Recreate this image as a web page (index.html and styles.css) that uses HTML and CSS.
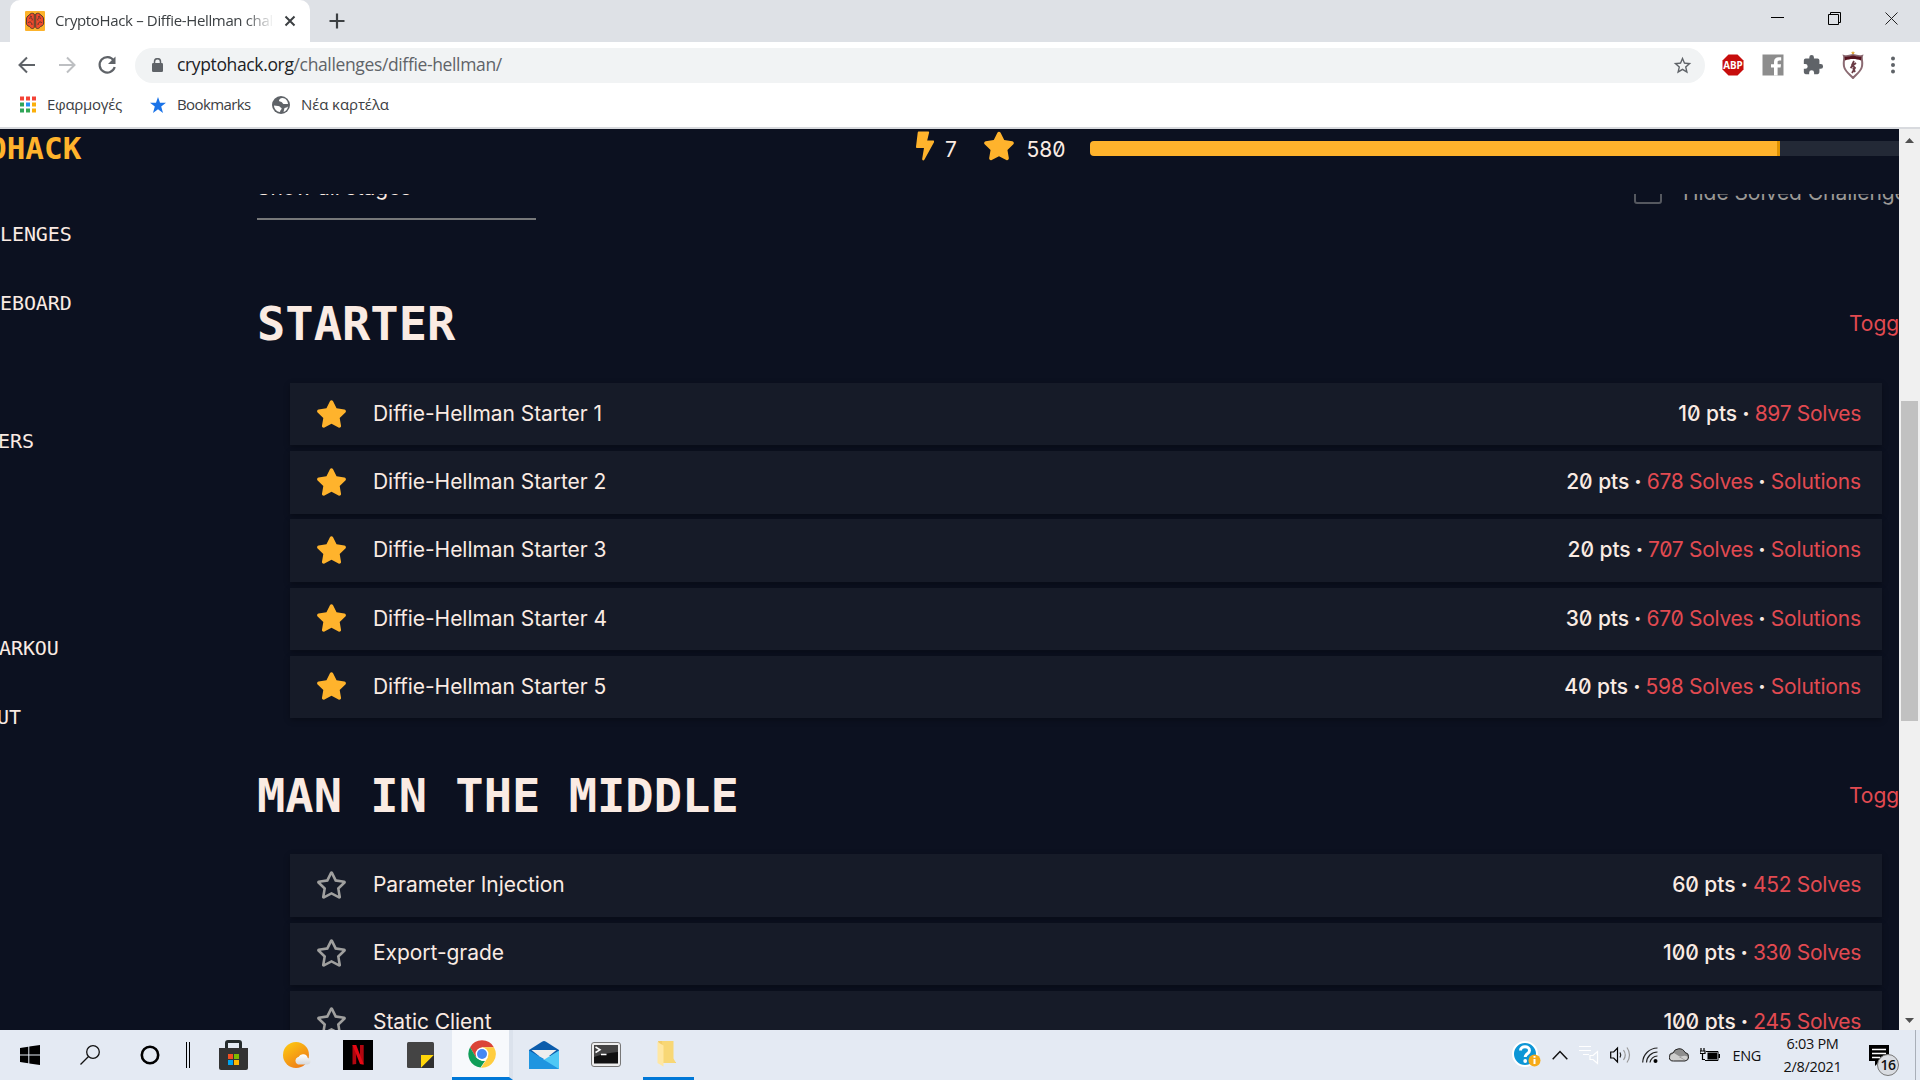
FILE: index.html
```html
<!DOCTYPE html>
<html lang="en">
<head>
<meta charset="utf-8">
<title>CryptoHack – Diffie-Hellman challenges</title>
<link rel="stylesheet" href="styles.css">
</head>
<body>
<svg class="defs" width="0" height="0">
  <symbol id="star" viewBox="0 0 576 512"><path d="M259 18 194 150 48 171c-26 4-37 36-18 55l106 103-25 145c-5 26 23 46 46 34l131-69 131 69c23 12 51-8 46-34l-25-145 106-103c19-19 8-51-18-55l-146-21-65-132c-12-23-46-24-58 0z"/></symbol>
  <symbol id="star-o" viewBox="0 0 576 512"><path d="M528 171 382 150 317 18c-12-23-46-24-58 0l-65 132-146 21c-26 4-37 36-18 55l106 103-25 145c-5 26 23 46 46 34l131-69 131 69c23 12 51-8 46-34l-25-145 106-103c19-19 8-51-18-55zM389 312l23 138-124-66-124 66 23-138L87 214l139-20 62-126 62 126 139 20z"/></symbol>
</svg>
<div class="screen">
  <header class="browser">
    <div class="tabstrip">
      <div class="tab">
        <svg class="favicon" viewBox="0 0 20 20"><rect width="20" height="20" rx="1" fill="#fcb32c"/><path d="M9.300 3C7 1.500 5 2.500 4.500 4 2 5 1 7 1.500 10c-.7 3 .5 5 3 5.500C6 18 8.500 18 9.300 16.500z" fill="#f04a2c" stroke="#56372f"/><path d="M10.700 3c2.300-1.500 4.300-.5 4.800 1C18 5 19 7 18.500 10c.7 3-.5 5-3 5.500-1.500 2.500-4 2.500-4.800 1z" fill="#f04a2c" stroke="#56372f"/><path d="M4 7.500c2-1.500 4 0 3 2M3 12c1.500-2 4-1 4 2M16 7.500c-2-1.500-4 0-3 2M17 12c-1.500-2-4-1-4 2M5 5l2 1M15 5l-2 1" fill="none" stroke="#56372f"/></svg>
        <span class="tab-title">CryptoHack – Diffie-Hellman challenges</span>
        <svg class="tab-close" viewBox="0 0 12 12"><path d="M1.500 1.500l9 9M10.500 1.500l-9 9" stroke="#3c4043" stroke-width="2"/></svg>
      </div>
      <svg class="newtab" viewBox="0 0 16 16"><path d="M8 .5v15M.5 8h15" stroke="#3c4043" stroke-width="2.200"/></svg>
      <div class="winctl">
        <svg width="13" height="13" viewBox="0 0 13 13"><path d="M0 5.500h13" stroke="#000"/></svg>
        <svg width="13" height="13" viewBox="0 0 13 13"><path d="M.5 2.500h10v10h-10zM2.500 2.500v-2h10v10h-2" fill="none" stroke="#000"/></svg>
        <svg width="13" height="13" viewBox="0 0 13 13"><path d="M.5.500l12 12M12.500.500l-12 12" stroke="#222"/></svg>
      </div>
    </div>
    <div class="toolbar">
      <svg class="nav" viewBox="0 0 20 20"><path d="M18 10H3M10 2.500L2.500 10l7.500 7.500" fill="none" stroke="#5f6368" stroke-width="2"/></svg>
      <svg class="nav" viewBox="0 0 20 20"><path d="M2 10h15M10 2.500l7.500 7.500-7.500 7.500" fill="none" stroke="#bdbfc2" stroke-width="2"/></svg>
      <svg class="nav" viewBox="0 0 20 20"><path d="M16.700 5.500A7.700 7.700 0 1 0 17.700 12" fill="none" stroke="#5f6368" stroke-width="2.200"/><path d="M18.500 1.500v7.500H11z" fill="#5f6368"/></svg>
      <div class="omnibox">
        <svg class="lock" viewBox="0 0 11 14"><rect y="5" width="11" height="9" rx="1.300" fill="#5f6368"/><path d="M2.500 6V3.700a3 3 0 0 1 6 0V6" fill="none" stroke="#5f6368" stroke-width="1.500"/></svg>
        <span class="url"><b>cryptohack.org</b>/challenges/diffie-hellman/</span>
        <svg class="fav" viewBox="0 0 24 24"><path d="M22 9.200l-7.200-.6L12 2 9.200 8.600 2 9.200l5.500 4.700L5.800 21l6.200-3.700 6.200 3.700-1.600-7.100zM12 15.400l-3.800 2.300 1-4.300-3.300-2.900 4.400-.4L12 6.100l1.700 4 4.400.4-3.300 2.900 1 4.300z" fill="#5f6368"/></svg>
      </div>
      <div class="exts">
        <svg class="ext" viewBox="0 0 22 22"><path d="M6.500.5h9l6 6v9l-6 6h-9l-6-6v-9z" fill="#c70d0c"/><text x="11" y="14.800" class="abp" textLength="19.500" lengthAdjust="spacingAndGlyphs">ABP</text></svg>
        <svg class="ext" viewBox="0 0 22 22"><rect x=".5" y=".5" width="21" height="21" fill="#8d8d8d"/><path d="M12 21.500v-8H9v-3.300h3V8c0-3.200 1.900-4.700 4.600-4.700h2.600v3.200h-1.800c-1.500 0-1.800.7-1.800 1.800v1.900H19l-.4 3.300h-3v8z" fill="#fff"/></svg>
        <svg class="ext" viewBox="0 0 24 24"><path d="M20.500 11H19V7a2 2 0 0 0-2-2h-4V3.500a2.500 2.500 0 0 0-5 0V5H4a2 2 0 0 0-2 2v3.800h1.500a2.700 2.700 0 0 1 0 5.400H2V20a2 2 0 0 0 2 2h3.800v-1.500a2.700 2.700 0 0 1 5.400 0V22H17a2 2 0 0 0 2-2v-4h1.500a2.500 2.500 0 0 0 0-5z" fill="#5f6368"/></svg>
        <svg class="ext crest" viewBox="0 0 22 28"><path d="M11 0l.7 1.300H13l-1 1 .3 1.200L11 3l-1.300.5.3-1.200-1-1h1.300z" fill="#e0a838"/><path d="M2 5c3 1 6-.5 9-1 3 .5 6 2 9 1-1 3 1.500 7-.5 12-1.500 4-6 7-8.500 10C8.500 24 4 21 2.500 17 .5 12 3 8 2 5z" fill="#fff" stroke="#8b6a72" stroke-width="2"/><path d="M2.500 5.500c3 .7 6-.5 8.500-1 2.500.5 5.500 1.700 8.500 1L19 9.500c-5-2-11-2-16 0z" fill="#57141f"/><path d="M12 10l-2 4 3 3-3 5M14 12l-4 3M11 17l2 4M8.500 17l2-2" fill="none" stroke="#6a3b45" stroke-width="1.800"/></svg>
        <svg class="ext" viewBox="0 0 22 22"><g fill="#5f6368"><circle cx="11" cy="4.500" r="2"/><circle cx="11" cy="11" r="2"/><circle cx="11" cy="17.500" r="2"/></g></svg>
      </div>
    </div>
    <div class="bookmarks">
      <svg class="apps" viewBox="0 0 16 16"><path d="M0 0h4v4H0zM6 0h4v4H6zM12 0h4v4h-4z" fill="#f44336"/><path d="M0 6h4v4H0zM0 12h4v4H0z" fill="#2fa45a"/><path d="M6 6h4v4H6z" fill="#2491f5"/><path d="M6 12h4v4H6z" fill="#34a853"/><path d="M12 6h4v4h-4zM12 12h4v4h-4z" fill="#fbaf0a"/></svg>
      <span class="bm bm-apps">Εφαρμογές</span>
      <svg class="bstar" viewBox="0 0 16 16"><path d="M8 0l2 5.700 6 .1-4.800 3.700L13 16l-5-3.800L3 16l1.800-6.500L0 5.800l6-.1z" fill="#1a73e8"/></svg>
      <span class="bm bm-marks">Bookmarks</span>
      <svg class="globe" viewBox="0 0 18 18"><circle cx="9" cy="9" r="9" fill="#5f6368"/><path d="M10.500 2C8 2 7 3.500 7 5c1 1 3 .5 3.500 2 .4 1.500 3.500 1 5.500 1 0-3-2.500-6-5.500-6zM2 9.500l4 .5c2 0 2 1.500 3.500 2 .5 1.500-1 1.500-1.500 4C5 16 2 13 2 9.500zM16 10.500c-1 .5-2 1.500-3.500 1.500l-1 4c2.500-.8 4-2.500 4.500-5.500z" fill="#fff"/></svg>
      <span class="bm bm-new">Νέα καρτέλα</span>
    </div>
  </header>

  <main class="viewport">
    <div class="page">
      <div class="topbar">
        <span class="brand">OHACK</span>
        <svg class="bolt" viewBox="0 0 18 30"><path d="M3 .5h9c1 0 1.300.700 1 1.500L11.200 9.500H17c1 0 1.500.9 1 1.700L8.500 28.500c-1 1.500-2.500 1-2.300-.7L8 17H1.200C.3 17 0 16.500 0 15.700L1.700 1.800C1.800.9 2.200.5 3 .5z"/></svg>
        <span class="stat streak">7</span>
        <svg class="score-star"><use href="#star"/></svg>
        <span class="stat score">580</span>
        <div class="progress"><div class="progress-fill"></div></div>
      </div>
      <div class="body">
        <nav class="side">
          <span>LENGES</span><span>EBOARD</span><span class="s3">ERS</span><span class="s4">ARKOU</span><span class="s5">UT</span>
        </nav>
        <div class="content">
          <div class="filters">
            <div class="select"><span>Show all stages</span></div>
            <label class="hide"><i></i><span>Hide Solved Challenges</span></label>
          </div>
          <section>
            <div class="head"><h2>STARTER</h2><a>Toggle</a></div>
            <ul>
              <li><svg><use href="#star"/></svg><span class="name">Diffie-Hellman Starter 1</span><span class="meta"><b>10 pts</b><i>·</i><a>897 Solves</a></span></li>
              <li><svg><use href="#star"/></svg><span class="name">Diffie-Hellman Starter 2</span><span class="meta"><b>20 pts</b><i>·</i><a>678 Solves</a><i>·</i><a class="sol">Solutions</a></span></li>
              <li><svg><use href="#star"/></svg><span class="name">Diffie-Hellman Starter 3</span><span class="meta"><b>20 pts</b><i>·</i><a>707 Solves</a><i>·</i><a class="sol">Solutions</a></span></li>
              <li><svg><use href="#star"/></svg><span class="name">Diffie-Hellman Starter 4</span><span class="meta"><b>30 pts</b><i>·</i><a>670 Solves</a><i>·</i><a class="sol">Solutions</a></span></li>
              <li><svg><use href="#star"/></svg><span class="name">Diffie-Hellman Starter 5</span><span class="meta"><b>40 pts</b><i>·</i><a>598 Solves</a><i>·</i><a class="sol">Solutions</a></span></li>
            </ul>
          </section>
          <section class="mitm">
            <div class="head"><h2>MAN IN THE MIDDLE</h2><a>Toggle</a></div>
            <ul class="open">
              <li><svg><use href="#star-o"/></svg><span class="name">Parameter Injection</span><span class="meta"><b>60 pts</b><i>·</i><a>452 Solves</a></span></li>
              <li><svg><use href="#star-o"/></svg><span class="name">Export-grade</span><span class="meta"><b>100 pts</b><i>·</i><a>330 Solves</a></span></li>
              <li><svg><use href="#star-o"/></svg><span class="name">Static Client</span><span class="meta"><b>100 pts</b><i>·</i><a>245 Solves</a></span></li>
            </ul>
          </section>
        </div>
      </div>
    </div>
    <div class="scrollbar">
      <svg viewBox="0 0 9 5"><path d="M0 5L4.500 0 9 5z"/></svg>
      <div class="thumb"></div>
      <svg viewBox="0 0 9 5"><path d="M0 0l4.500 5L9 0z"/></svg>
    </div>
  </main>

  <footer class="taskbar">
    <div class="cell c-start"><svg width="20" height="20" viewBox="0 0 20 20"><path d="M0 3l8.300-1.200v7.700H0zM9.300 1.600L20 0v9.500H9.300zM0 10.500h8.300v7.700L0 17zM9.300 10.500H20V20L9.300 18.400z"/></svg></div>
    <div class="cell c-search"><svg width="20" height="20" viewBox="0 0 20 20"><g fill="none" stroke="#111" stroke-width="1.300"><circle cx="13" cy="7" r="6.300"/><path d="M8.500 11.500L.5 19.500"/></g></svg></div>
    <div class="cell c-cortana"><svg width="20" height="20" viewBox="0 0 20 20"><circle cx="10" cy="10" r="8.200" fill="none" stroke="#000" stroke-width="2.600"/></svg></div>
    <div class="cell c-bars"><svg width="4" height="26" viewBox="0 0 4 26"><path d="M.5 0v26M3.500 0v26" stroke="#000"/></svg></div>
    <div class="cell c-store"><svg width="29" height="30" viewBox="0 0 29 30"><path d="M7.500 9V3q0-1.500 1.500-1.500h11q1.500 0 1.500 1.500v6" fill="none" stroke="#252b2c" stroke-width="3"/><path d="M0 8h29v20q0 2-2 2H2q-2 0-2-2z" fill="#333"/><path d="M9 14h5v5H9z" fill="#f25022"/><path d="M15 14h5v5h-5z" fill="#7fba00"/><path d="M9 20h5v5H9z" fill="#00a4ef"/><path d="M15 20h5v5h-5z" fill="#ffb900"/></svg></div>
    <div class="cell c-weather"><svg width="28" height="26" viewBox="0 0 28 26"><defs><linearGradient id="sun" x1="0" y1="0" x2=".7" y2="1"><stop stop-color="#ffcf10"/><stop offset="1" stop-color="#ee7b18"/></linearGradient><linearGradient id="cl" x2="0" y2="1"><stop stop-color="#fff"/><stop offset="1" stop-color="#d5d8dc"/></linearGradient></defs><circle cx="13" cy="13" r="13" fill="url(#sun)"/><path d="M15 22.500a4 4 0 0 1 0-7.500h.5a5 5 0 0 1 9.300 1 3.300 3.300 0 0 1 0 6.500z" fill="url(#cl)"/></svg></div>
    <div class="cell c-netflix"><svg width="30" height="30" viewBox="0 0 30 30"><path d="M0 0h30v30H0z"/><path d="M9.500 5h3.700v19l-3.700.5zM17 5h3.700v19.500L17 24z" fill="#b1060f"/><path d="M9.500 5h3.700l7.500 19.500L17 24z" fill="#e50914"/></svg></div>
    <div class="cell c-note"><svg width="27" height="26" viewBox="0 0 27 26"><rect width="27" height="26" rx="1.500" fill="#444"/><path d="M14 26V13h13z" fill="#ffd60a"/><path d="M14 26L27 13v13z" fill="#303030"/></svg></div>
    <div class="cell active"><svg width="28" height="28" viewBox="0 0 28 28"><path d="M2.100 7.200A13.700 13.700 0 0 1 25.900 7.200H14L8 17.500z" fill="#db4437"/><path d="M2.100 7.200L8.100 17.400 14 21h3l-4.500 6.600A13.700 13.700 0 0 1 2.100 7.200z" fill="#0f9d58"/><path d="M25.900 7.200H14l5.900 10.200L13 27.700A13.700 13.700 0 0 0 25.900 7.200z" fill="#ffcd40"/><circle cx="14" cy="14" r="6.400" fill="#fff"/><circle cx="14" cy="14" r="5" fill="#4688f4"/></svg></div>
    <div class="cell c-mail"><svg width="30" height="28" viewBox="0 0 30 28"><path d="M0 9L13 .7q2-1.200 4 0L30 9v6H0z" fill="#0b5cab"/><path d="M2.500 9h25L15 19z" fill="#eee"/><path d="M0 9.500L15 18 0 28z" fill="#1687d9"/><path d="M30 9.500L0 28h30z" fill="#4fc8f5"/><path d="M0 9.500L30 28H0z" fill="#1f95e0"/></svg></div>
    <div class="cell c-term"><svg width="30" height="26" viewBox="0 0 30 26"><rect x=".5" y=".5" width="29" height="24" rx="2.500" fill="#eee" stroke="#777"/><rect x="3" y="3" width="24" height="18.500" fill="#111"/><path d="M3 3h24v7Q14 11 3 15z" fill="#444"/><path d="M4.500 5l4.500 2.800-4.500 2.700" fill="none" stroke="#fff" stroke-width="1.500"/><path d="M10 12.500h5.500" stroke="#fff" stroke-width="1.500"/></svg></div>
    <div class="cell folder"><svg width="20" height="26" viewBox="0 0 20 26"><path d="M1 0h15v21h3v1H6z" fill="#f3cd68"/><path d="M5 0h11.500v17.500L19 22H6z" fill="#f8d775"/><path d="M.5 1l6 3.500v21L.5 22z" fill="#ffe7a2"/></svg></div>

    <div class="tray">
      <div class="t-help"><svg width="30" height="28" viewBox="0 0 30 28"><circle cx="13" cy="13" r="12" fill="#0d96d6" stroke="#fff" stroke-width="2"/><path d="M8.500 9.500c0-5 9-5 9 0 0 3.500-4.300 3-4.300 6.500" fill="none" stroke="#fff" stroke-width="3"/><circle cx="13.200" cy="20" r="1.900" fill="#fff"/><circle cx="22.500" cy="19.500" r="6" fill="#f6ab1a"/><path d="M22.500 18v5M22.500 15v1.800" stroke="#fff" stroke-width="2"/></svg></div>
      <svg width="16" height="10" viewBox="0 0 16 10"><path d="M.7 9.300L8 1.500l7.300 7.800" fill="none" stroke="#111" stroke-width="1.500"/></svg>
      <svg width="20" height="20" viewBox="0 0 20 20"><path d="M0 1.500h12M0 5.500h12M4 9.500h6M11 10.500h3l4.500-4v12l-4.500-4h-3z" fill="none" stroke="#fff" stroke-width="1.200"/></svg>
      <svg width="21" height="18" viewBox="0 0 21 18"><path d="M.7 6h3L7.500 2v14l-3.800-4h-3z" fill="none" stroke="#000" stroke-width="1.200"/><path d="M10 6.500q1.500 2.500 0 5" fill="none" stroke="#222" stroke-width="1.200"/><path d="M13.500 4q3.500 5 0 10M17 1.500q5 7.500 0 15" fill="none" stroke="#999" stroke-width="1.200"/></svg>
      <svg width="16" height="16" viewBox="0 0 16 16"><g fill="none" stroke="#222" stroke-width="1.200"><path d="M.7 15.500A15 15 0 0 1 15.500 1M4.500 15.500A11 11 0 0 1 15.500 5M8 15.500A7.500 7.500 0 0 1 15.500 9"/></g><circle cx="13.500" cy="14" r="2"/></svg>
      <svg width="20" height="14" viewBox="0 0 20 14"><path d="M4.500 13A4 4 0 0 1 4 5a6.500 6.500 0 0 1 12-.5 4.300 4.300 0 0 1 0 8.500z" fill="#8e8e8e"/><path d="M1 10q0-3 4-5l12 7.500-12.500.5Q1 13 1 10zM19 10q-1-3-5-2l-4 1 7 4q2-1 2-3z" fill="#cfcfcf"/><path d="M4.500 13A4 4 0 0 1 4 5a6.500 6.500 0 0 1 12-.5 4.300 4.300 0 0 1 0 8.500z" fill="none" stroke="#222"/></svg>
      <svg width="20" height="14" viewBox="0 0 20 14"><path d="M1 0v3M4 0v3M0 3h5v2.500H0zM2.500 6v5.500H5" fill="none" stroke="#000" stroke-width="1.200"/><path d="M6 3.500h12v9H5" fill="none" stroke="#000"/><path d="M7.500 4.500h9.500v7H7.500zM18.500 6h1.500v4h-1.500z"/></svg>
      <span class="lang">ENG</span>
      <div class="clock"><span class="time">6:03 PM</span><span class="date">2/8/2021</span></div>
      <div class="notif"><svg width="21" height="21" viewBox="0 0 21 21"><path d="M0 0h20v16h-9l-5 5v-5H0z"/><path d="M3 4.500h14M3 8.500h14M3 12.500h8" stroke="#fff" stroke-width="1.300"/></svg><span class="count">16</span></div>
      <div class="peek"></div>
    </div>
  </footer>
</div>
</body>
</html>
```

FILE: styles.css
```css
* { box-sizing: border-box; }
body { margin: 0; background: #0c1120; overflow: hidden; }
svg { display: block; flex: none; }
.defs { position: absolute; }
.screen { width: 1920px; height: 1080px; display: flex; flex-direction: column; overflow: hidden; }

/* browser chrome */
.browser { height: 129px; flex: none; background: #fff; border-bottom: 2px solid #d8dade; font-family: "Open Sans", "Noto Sans", sans-serif; color: #3c4043; }
.tabstrip { height: 42px; background: #dee1e6; display: flex; padding-left: 10px; }
.tab { width: 300px; height: 42px; background: #fff; border-radius: 10px 10px 0 0; display: flex; align-items: center; padding-left: 15px; }
.favicon { width: 20px; height: 20px; }
.tab-title { width: 220px; margin: -2px 0 0 10px; font-size: 15px; letter-spacing: -0.35px; white-space: nowrap; overflow: hidden; mask-image: linear-gradient(90deg, #000 190px, transparent 219px); }
.tab-close { width: 12px; height: 12px; margin-left: 9px; }
.newtab { width: 16px; height: 16px; margin: 13px 0 0 19px; }
.winctl { margin: 12px 22px 0 auto; display: flex; gap: 44px; }
.toolbar { height: 45px; display: flex; align-items: center; padding-top: 1px; }
.nav { width: 20px; height: 20px; margin-left: 17px; }
.nav + .nav { margin-left: 20px; }
.omnibox { width: 1570px; height: 35px; margin-left: 18px; border-radius: 18px; background: #f1f3f4; display: flex; align-items: center; padding: 0 12px 0 17px; }
.lock { width: 11px; height: 14px; }
.url { margin: -2px 0 0 14px; font-size: 17.5px; letter-spacing: -0.36px; color: #5f6368; white-space: nowrap; }
.url b { font-weight: 400; color: #202124; }
.fav { width: 21px; height: 21px; margin-left: auto; }
.exts { flex: 1; display: flex; align-items: center; gap: 18px; padding-left: 16.5px; }
.ext { width: 22px; height: 22px; }
.crest { height: 28px; }
.abp { font: 700 10.5px "Open Sans", sans-serif; fill: #fff; text-anchor: middle; }
.bookmarks { height: 37px; display: flex; align-items: center; padding: 0 0 2px 20px; font-size: 15px; }
.bm { white-space: nowrap; margin-top: -1px; }
.apps { width: 16px; height: 17px; }
.bm-apps { width: 76px; margin-left: 11px; letter-spacing: -0.3px; }
.bstar { width: 16px; height: 16px; margin-left: 27px; }
.bm-marks { width: 74px; margin-left: 11px; letter-spacing: -0.6px; }
.globe { width: 18px; height: 18px; margin-left: 21px; }
.bm-new { margin-left: 11px; letter-spacing: -0.1px; }

/* page */
.viewport { height: 901px; flex: none; display: flex; overflow: hidden; }
.page { width: 1899px; height: 901px; overflow: hidden; display: flex; flex-direction: column; background: #0c1120; color: #faebe3; font-family: Inter, sans-serif; font-size: 21px; letter-spacing: -0.05px; font-feature-settings: "zero" 1; }
.topbar { height: 65px; flex: none; display: flex; align-items: flex-start; }
.brand { width: 928px; margin-left: -12px; font: 700 31px/38px "DejaVu Sans Mono", monospace; letter-spacing: 0; color: #ffb32c; }
.bolt { width: 18px; height: 30px; margin-top: 2px; fill: #ffb32c; }
.stat { line-height: 42px; font-weight: 400; }
.streak { width: 37.5px; margin-left: 11px; }
.score-star { width: 32px; height: 30px; margin-top: 2px; fill: #ffb32c; }
.score { width: 63.5px; margin-left: 12px; white-space: nowrap; }
.progress { flex: 1; height: 15px; margin-top: 12px; border-radius: 4px 0 0 4px; background: #232936; overflow: hidden; }
.progress-fill { width: 690px; height: 15px; background: #ffb32c; border-right: 3px solid #e09300; }
.body { flex: 1; display: flex; min-height: 0; }
.side { width: 257px; flex: none; padding-top: 28px; display: flex; flex-direction: column; gap: 45px; font: 20px/24px "DejaVu Sans Mono", monospace; letter-spacing: -0.1px; }
.s3 { margin: 69px 0 0 -2px; }
.s4 { margin: 138px 0 0 -1px; }
.s5 { margin-left: -3px; }
.content { flex: 1; min-width: 0; overflow: hidden; }
.filters { height: 81px; display: flex; justify-content: space-between; overflow: hidden; }
.select { width: 279px; height: 26px; border-bottom: 2px solid #777879; overflow: hidden; line-height: 24px; }
.select span { display: block; margin-top: -18px; }
.hide { width: 265px; display: flex; color: #9b9996; white-space: nowrap; }
.hide i { width: 28px; height: 28px; flex: none; margin: -18px 21px 0 0; border: 2px solid #55585f; border-radius: 3px; }
.hide span { line-height: 24px; margin-top: -13px; }
.head { height: 98px; display: flex; justify-content: space-between; align-items: center; white-space: nowrap; }
.head h2 { margin: 0; font: 700 47px/98px "DejaVu Sans Mono", monospace; letter-spacing: 0.04px; }
.head a { width: 50px; margin-top: -2px; }
a { color: #e24a51; }
ul { list-style: none; margin: 10px 17px 28.2px 33px; padding: 0; display: flex; flex-direction: column; gap: 5.8px; }
.mitm { padding-top: 1px; }
.mitm ul { margin-top: 9px; }
li { height: 62.4px; flex: none; display: flex; align-items: center; padding: 0 21px 0 26px; background: #161b28; box-shadow: 0 2px 6px rgba(0, 0, 0, .3); white-space: nowrap; }
li svg { width: 31px; height: 28px; margin-top: -1px; fill: #ffb32c; }
.open svg { fill: #a0a09f; }
.name { margin: -1.5px 0 0 26px; }
.meta { margin: -1.5px 0 0 auto; display: flex; }
.meta b { font-weight: 500; }
.meta i { width: 17.5px; font-style: normal; font-weight: 800; text-align: center; }
.meta a { letter-spacing: -0.3px; }
.meta .sol { letter-spacing: -0.15px; }
.scrollbar { width: 21px; background: #f0f0f0; display: flex; flex-direction: column; align-items: center; padding: 9px 0 7px; }
.scrollbar svg { width: 9px; height: 5px; fill: #505050; }
.thumb { width: 17px; height: 320px; margin: 258px 0 auto; background: #c1c1c1; }

/* taskbar */
.taskbar { height: 50px; flex: none; background: #e4eaf3; display: flex; font-family: "Open Sans", "Noto Sans", sans-serif; color: #111; }
.cell { height: 50px; display: flex; align-items: center; justify-content: center; flex: none; }
.c-start { width: 60px; }
.c-search { width: 60px; }
.c-cortana { width: 60px; }
.c-bars { width: 16px; }
.c-store { width: 75px; }
.c-weather { width: 52px; }
.c-netflix { width: 70px; }
.c-note { width: 59px; padding-right: 5px; }
.active { width: 61px; background: #f7f9fc; border-bottom: 3px solid #0078d7; border-right: 4px solid #dbe2ec; padding-left: 2px; }
.c-mail { width: 62px; }
.c-term { width: 61px; }
.folder { width: 51px; margin-left: 7px; padding-right: 4px; border-bottom: 3px solid #0078d7; }
.tray { margin-left: auto; display: flex; align-items: center; }
.t-help { margin-right: 10px; }
.tray > svg { margin-right: 11px; }
.lang { font-size: 14.5px; width: 40px; margin-left: 1.500px; letter-spacing: -0.3px; }
.clock { width: 80px; display: flex; flex-direction: column; align-items: center; font-size: 14.5px; line-height: 23px; letter-spacing: -0.3px; white-space: nowrap; }
.notif { width: 46px; height: 50px; margin-left: 16.5px; padding-top: 15px; position: relative; }
.count { position: absolute; left: 8px; top: 24px; width: 22px; height: 22px; border: 1px solid #777; border-radius: 50%; background: #d9dce1; font-size: 14px; line-height: 20px; font-weight: 600; text-align: center; letter-spacing: -0.5px; }
.peek { width: 5px; height: 50px; border-left: 1px solid #a9afb8; }
```
